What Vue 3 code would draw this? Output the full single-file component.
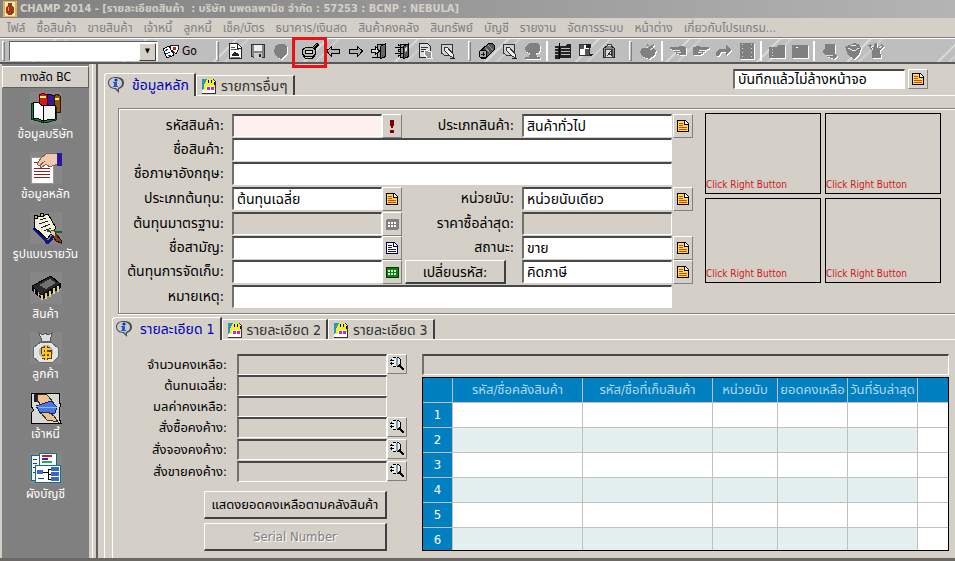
<template>
  <div class="window">
    <svg class="defs" aria-hidden="true">
      <symbol id="note" viewBox="0 0 14 14">
        <path d="M1 1H9L13 5V13H1Z" fill="#000" />
        <path d="M2 2H8V6H12V12H2Z" fill="#ffd75a" />
        <path d="M9 2L12 5H9Z" fill="#fff" />
        <path d="M3 4H7V5H3ZM3 6H7V7H3ZM3 8H11V9H3ZM3 10H11V11H3Z" fill="#d04410" />
      </symbol>
      <symbol id="note-blue" viewBox="0 0 14 14">
        <path d="M1 1H9L13 5V13H1Z" fill="#000050" />
        <path d="M2 2H8V6H12V12H2Z" fill="#fff" />
        <path d="M9 2L12 5H9Z" fill="#fff" />
        <path d="M3 4H7V5H3ZM3 6H7V7H3ZM3 8H11V9H3ZM3 10H11V11H3Z" fill="#1018a0" />
      </symbol>
      <symbol id="alert" viewBox="0 0 14 14">
        <path d="M5 1H9V5L8 9H6L5 5ZM5 11H9V14H5Z" fill="#800000" />
      </symbol>
      <symbol id="grid-gray" viewBox="0 0 14 14">
        <rect x="1" y="2" width="13" height="11" rx="2" fill="#808080" />
        <path d="M3 5.5H12M3 8.5H12" stroke="#fff" stroke-width="2" stroke-dasharray="2 1" />
      </symbol>
      <symbol id="grid-green" viewBox="0 0 14 14">
        <rect x="1.5" y="2.5" width="12" height="10" rx="1" fill="#108010" stroke="#003800" />
        <path d="M3 5.5H12M3 8.5H12" stroke="#d8ffd8" stroke-width="2" stroke-dasharray="2 1" />
      </symbol>
      <symbol id="lens" viewBox="0 0 16 16">
        <circle cx="7" cy="6" r="5" fill="#e4f2f8" stroke="#000" stroke-dasharray="3 1" />
        <path d="M7 2H9V10H7Z" fill="#909aa0" />
        <path d="M1 4H5V5H1ZM1 7H5V8H1Z" fill="#000" />
        <path d="M10 9L14 13" stroke="#000" stroke-width="2" />
        <circle cx="14" cy="13" r="1" fill="#fff" stroke="#000" />
      </symbol>
      <symbol id="info" viewBox="0 0 18 18">
        <path d="M9 1C4 1 1 3 1 7C1 10 4 13 8 13L12 17V13C15 12 17 10 17 7C17 3 14 1 9 1Z" fill="#484c50" />
        <path d="M8 2C4 2 2 4 2 7C2 10 5 12 9 12L11 14V12C14 11 15 9 15 7C15 4 12 2 8 2Z" fill="#c4ccd2" />
        <circle cx="9" cy="4" r="1.6" fill="#1830b0" />
        <path d="M6 6H10V10H11V11H6V10H7V7H6Z" fill="#2858c8" />
      </symbol>
      <symbol id="picture" viewBox="0 0 16 16">
        <path d="M1 1H12L15 4V16H1Z" fill="#333" />
        <path d="M1 1H12L14 4V15H1Z" fill="#fff" />
        <path d="M1 1H8L5 8L1 13Z" fill="#2898b8" />
        <path d="M6 1H12L14 5V10H12V8H5V12H3V7Z" fill="#f8f020" />
        <path d="M7 2H8V5H7ZM10 2H11V5H10ZM13 4H14V7H13Z" fill="#000" />
        <path d="M6 9H9V12H6ZM10 9H13V12H10Z" fill="#e020b0" />
      </symbol>
      <symbol id="logo" viewBox="0 0 14 16">
        <rect width="14" height="16" fill="#e8b050" />
        <rect x="2" y="1" width="10" height="14" fill="#fbe9b8" />
        <path d="M5 2H9V4L11 7V11L9 14H5L3 11V7L5 4Z" fill="#a03818" />
        <path d="M5 6V10" stroke="#e09060" />
      </symbol>
      <symbol id="cards" viewBox="0 0 18 16">
        <path d="M1 6L7 3L12 12L5 15Z" fill="#fff" stroke="#000" />
        <path d="M3 8L6 6M4 11L8 9M6 13L9 12" stroke="#2030a0" />
        <path d="M9 2H16V7L14 11L8 6Z" fill="#fff" stroke="#301820" />
        <path d="M11 4H14V7H11Z" fill="#c02020" />
      </symbol>

      <symbol id="doc" viewBox="0 0 18 18">
        <path d="M3.5 1.5H11.5L15.5 5.5V16.5H3.5Z" fill="#fff" stroke="#222" />
        <path d="M11 2V6H15" fill="none" stroke="#222" />
        <path d="M5 5.5H9M5 7.5H13" stroke="#555" />
        <path d="M6 14V12L9 10L13 12V14Z" fill="#222" />
        <path d="M5 15.5H14" stroke="#777" />
      </symbol>
      <symbol id="disk" viewBox="0 0 18 18">
        <path d="M2.5 2.5H15.5V15.5H4.5L2.5 14Z" fill="#858585" stroke="#333" />
        <rect x="5" y="3" width="8" height="6" fill="#eee" />
        <rect x="5" y="11" width="8" height="5" fill="#ccc" />
        <rect x="10" y="12" width="2" height="3" fill="#222" />
      </symbol>
      <symbol id="shield" viewBox="0 0 18 18">
        <path d="M3 4L7 2H12L15 5V11L12 15L9 17L4 14L2 10Z" fill="#808080" />
      </symbol>
      <symbol id="find" viewBox="0 0 18 18">
        <path d="M12 7L17 2" stroke="#000" stroke-width="4" />
        <path d="M12 6L16 2" stroke="#999" />
        <path d="M2 13V15L5 17H11L14 15V13Z" fill="#000" />
        <ellipse cx="8" cy="10" rx="7" ry="5" fill="#b8b8b8" stroke="#000" />
        <ellipse cx="8" cy="10" rx="4" ry="2" fill="#ddd" stroke="#000" />
        <path d="M4 15H11" stroke="#ccc" />
      </symbol>
      <symbol id="left" viewBox="0 0 18 18">
        <path d="M2.5 9L7.5 4.5V7.5H15.5V11.5H7.5V14.5Z" fill="#b0b0b0" stroke="#000" />
      </symbol>
      <symbol id="right" viewBox="0 0 18 18">
        <path d="M15.5 9L10.5 4.5V7.5H2.5V11.5H10.5V14.5Z" fill="#b0b0b0" stroke="#000" />
      </symbol>
      <symbol id="door" viewBox="0 0 18 18">
        <path d="M7.5 2.5H14.5V15.5H7.5Z" fill="#aaa" stroke="#000" />
        <path d="M10.5 4.5L15.5 1.5V14.5L10.5 16.5Z" fill="#666" stroke="#000" />
        <path d="M1.5 7.5H5.5V4.5L9.5 9L5.5 12.5V10.5H1.5Z" fill="#ddd" stroke="#000" />
        <path d="M2 15.5H10" stroke="#000" />
      </symbol>
      <symbol id="door-all" viewBox="0 0 18 18">
        <path d="M7.5 2.5H14.5V15.5H7.5Z" fill="#999" stroke="#000" />
        <path d="M10.5 4.5L15.5 1.5V14.5L10.5 16.5Z" fill="#555" stroke="#000" />
        <path d="M2 5.5H8M5 2.5L9 5.5L5 8.5M2 11.5H8M5 8.5L9 11.5L5 14.5" fill="none" stroke="#000" />
        <path d="M12 6L14 5V9L12 10Z" fill="#ddd" />
      </symbol>
      <symbol id="report" viewBox="0 0 18 18">
        <path d="M3.5 1.5H11.5L14.5 4.5V15.5H3.5Z" fill="#ddd" stroke="#222" />
        <path d="M5 5.5H12M5 7.5H10M5 9.5H8" stroke="#333" />
        <path d="M9 8L15 10L16 16H11L8 12Z" fill="#999" stroke="#fff" />
      </symbol>
      <symbol id="edit" viewBox="0 0 18 18">
        <path d="M2.5 2.5H13.5V13.5H5.5L2.5 11Z" fill="#d0d0d0" stroke="#333" />
        <path d="M5 5L8 5L14 12L15 16L11 14L5 8Z" fill="#eee" stroke="#333" />
        <path d="M11 16.5H16" stroke="#222" />
      </symbol>
      <symbol id="roll" viewBox="0 0 18 18">
        <path d="M1 10L10 2L14 1L17 4L16 8L8 16L3 16Z" fill="#555" stroke="#000" />
        <path d="M7 5L12 11M10 3L15 8" stroke="#999" />
        <circle cx="5" cy="12" r="4" fill="#aaa" stroke="#000" />
        <path d="M5 10V14M3 12H7" stroke="#111" />
      </symbol>
      <symbol id="head" viewBox="0 0 18 18">
        <path d="M5 1H13L16 3V7L15 11H12L13 15H16V17H1V15H5L6 11L2 10L1 6Z" fill="#808080" />
      </symbol>
      <symbol id="folder-list" viewBox="0 0 18 18">
        <path d="M1 4H11L13 2H17V16H5V17H1Z" fill="#222" />
        <path d="M1 6H4V7H1ZM1 9H4V10H1ZM1 12H4V13H1ZM7 6H16V7H7ZM7 9H16V10H7ZM7 12H16V13H7Z" fill="#bbb" />
        <path d="M5.5 1V17" stroke="#000" />
      </symbol>
      <symbol id="chart" viewBox="0 0 18 18">
        <rect x="2.5" y="2.5" width="10" height="11" fill="#fff" stroke="#333" />
        <path d="M3 3H7V7H3ZM8 7H12V13H8Z" fill="#555" />
        <path d="M9 2H14V6H9ZM12 12H16L14 15Z" fill="#222" />
      </symbol>
      <symbol id="clipboard" viewBox="0 0 18 18">
        <path d="M3.5 6.5L9 2.5L14.5 6.5V15.5H3.5Z" fill="#888" stroke="#222" />
        <path d="M7 4V2H11V4M5.5 7.5H12.5V15.5H5.5Z" fill="#ddd" stroke="#444" />
        <path d="M7 14L11 9V14M8 12H11" fill="none" stroke="#333" />
      </symbol>
      <symbol id="globe" viewBox="0 0 18 18">
        <path d="M3 6H7L8 2L11 4L15 2L14 6L17 9L15 14L10 17L4 15L1 10Z" fill="#808080" />
        <path d="M7 6L10 4M11 8L14 6" stroke="#ddd" />
      </symbol>
      <symbol id="hand-left" viewBox="0 0 18 18">
        <path d="M1 5H8L12 4L17 5V13H12L7 12V10H5V8L1 7Z" fill="#808080" />
        <path d="M5 8H11V9H5ZM8 10H12V11H8Z" fill="#eee" />
      </symbol>
      <symbol id="hand-right" viewBox="0 0 18 18">
        <path d="M17 5H10L6 4L1 5V13H6L11 12V10H13V8L17 7Z" fill="#808080" />
        <path d="M7 8H13V9H7ZM6 10H10V11H6Z" fill="#eee" />
      </symbol>
      <symbol id="redo" viewBox="0 0 18 18">
        <path d="M1 14V10L4 7H11V3L17 8L11 13V10H6L4 14Z" fill="#808080" />
      </symbol>
      <symbol id="book" viewBox="0 0 18 18">
        <path d="M2 1H16V17H2Z" fill="#808080" />
        <path d="M4.5 2V16M13.5 2V16" stroke="#ddd" stroke-dasharray="1 3" />
      </symbol>
      <symbol id="folder" viewBox="0 0 18 18">
        <path d="M1 5H8L10 3H17V16H1Z" fill="#808080" />
        <path d="M4.5 7V14" stroke="#ddd" stroke-dasharray="1 2" />
      </symbol>
      <symbol id="board" viewBox="0 0 18 18">
        <path d="M1 3H17V16H1Z" fill="#808080" />
        <rect x="5" y="5" width="2" height="1" fill="#fff" />
      </symbol>
      <symbol id="scroll" viewBox="0 0 18 18">
        <path d="M4 2H14V12L16 14L13 17L5 14L2 10V8L4 7Z" fill="#808080" />
        <path d="M5 13H12V14H5Z" fill="#ddd" />
      </symbol>
      <symbol id="box" viewBox="0 0 18 18">
        <path d="M1 5L10 1L16 3L17 7L15 13L10 17L4 13Z" fill="#808080" />
        <path d="M4 6L10 9L15 6M7 4L12 3" fill="none" stroke="#eee" />
      </symbol>
      <symbol id="tools" viewBox="0 0 18 18">
        <path d="M1 3L4 2L6 6L8 1H10V6L14 2L17 4L13 8L14 16H5V9Z" fill="#808080" />
        <path d="M4 4L6 8M12 6L15 4" stroke="#eee" />
      </symbol>

      <symbol id="company" viewBox="0 0 32 32">
        <path d="M9 3L13 1L17 3V14H9Z" fill="#d81818" stroke="#500000" />
        <path d="M17 3L20 2L24 4V15H17Z" fill="#3c1890" stroke="#100030" />
        <path d="M24 4L27 2L30 4V20H24Z" fill="#8a5018" stroke="#301800" />
        <path d="M10 5H16M25 7H29" stroke="#fff060" stroke-width="2" />
        <path d="M1 11L10 13L13 15L17 13L26 15V28L15 31L1 27Z" fill="#108040" stroke="#003018" />
        <path d="M3 10L9 11L13 14V29L9 27L3 26Z" fill="#fff" stroke="#000" />
        <path d="M13 14L17 13H25V27L17 28L13 29Z" fill="#f4f4f4" stroke="#000" />
      </symbol>
      <symbol id="master" viewBox="0 0 32 32">
        <path d="M1 5H23V31H1Z" fill="#fff" stroke="#999" />
        <path d="M4 16.5H20M4 19.5H20M4 22.5H20M4 25.5H20M4 10.5H9" stroke="#902020" />
        <path d="M7 12L11 6L17 1H27V12L20 15L16 12L11 16L10 14L15 9L9 14Z" fill="#f0c8b0" stroke="#806050" />
        <rect x="27" y="1" width="5" height="13" fill="#2818a0" />
      </symbol>
      <symbol id="journal" viewBox="0 0 32 32">
        <path d="M4 16L18 31L25 22" fill="none" stroke="#101880" stroke-width="3" />
        <path d="M5 6L18 2L26 16L17 27L4 15Z" fill="#f4f0e0" stroke="#000" />
        <path d="M10 8L16 6M9 12L18 9M11 16L20 12M14 19L21 16" stroke="#222" />
        <circle cx="6" cy="5" r="2" fill="#d8b860" stroke="#000" />
        <circle cx="12" cy="3" r="2" fill="#d8b860" stroke="#000" />
        <path d="M17 19L32 20" stroke="#106030" stroke-width="2" />
        <path d="M21 21L26 22L31 28V31L26 29Z" fill="#804020" stroke="#201000" />
        <path d="M20 18L25 20V24L22 23Z" fill="#f0c8a0" />
      </symbol>
      <symbol id="product" viewBox="0 0 32 32">
        <path d="M2 14L21 4L30 12L12 24Z" fill="#282828" stroke="#000" />
        <path d="M9 13L20 7L26 11L16 17Z" fill="#707070" />
        <path d="M2 14V18L12 27V23L30 12V16L12 27Z" fill="#111" stroke="#000" />
        <path d="M12 23V28M16 21V27M20 19V25M24 16V22M28 14V20" stroke="#ddd090" stroke-width="2" />
        <path d="M4 17V21M8 20V25" stroke="#aaa" />
      </symbol>
      <symbol id="customer" viewBox="0 0 32 32">
        <path d="M9 1L13 3L15 1L18 3L22 1L20 9H12Z" fill="#ddd" stroke="#555" />
        <path d="M11 10H21L28 16V25L23 30H9L3 25V16Z" fill="#e4e4e4" stroke="#666" />
        <path d="M11 10H21" stroke="#666" stroke-width="2" />
        <circle cx="16" cy="20" r="7" fill="#b4b4b4" />
        <path d="M20 17H13V20H20V25H12M16 14V28" fill="none" stroke="#604000" stroke-width="4" />
        <path d="M20 17H13V21H20V25H12M16 14V28" fill="none" stroke="#ffc820" stroke-width="2" />
      </symbol>
      <symbol id="vendor" viewBox="0 0 32 32">
        <path d="M1 1H29V10L31 13L29 17V26L31 31H1V21L4 18L1 14Z" fill="#d8d8d4" stroke="#000" />
        <path d="M7 2L17 3L24 11L20 15L10 12L7 8Z" fill="#f0c090" stroke="#303030" />
        <path d="M6 14L21 9L27 15L25 21L11 22Z" fill="#4878e0" stroke="#102060" />
        <path d="M6 14L12 16L27 15" fill="none" stroke="#90b8ff" />
        <path d="M11 21L18 20L24 24L28 30L17 28Z" fill="#f0c090" stroke="#303030" />
        <rect x="4" y="2" width="3" height="8" fill="#202020" />
      </symbol>
      <symbol id="accounts" viewBox="0 0 32 32">
        <path d="M1 3H15V28H1Z" fill="#f4f4f4" stroke="#107080" />
        <path d="M9 1H26V17H9Z" fill="#fff" stroke="#107080" />
        <path d="M12 4H22" stroke="#c02030" stroke-width="2" />
        <path d="M12 7H18" stroke="#5020a0" stroke-width="2" />
        <path d="M12 10H22" stroke="#20b040" stroke-width="2" />
        <path d="M3 7.5H7M3 11.5H7M3 15.5H5M3 20.5H5" stroke="#1840a0" />
        <rect x="5.5" y="13.5" width="25" height="17" fill="#fff" stroke="#107080" />
        <path d="M13 20.5H18M18 17.5H22M18 22.5H22M18 27.5H22M18.5 17V28" fill="none" stroke="#000" />
        <path d="M7 18H13V22H7ZM21 15H29V19H21ZM21 20H29V24H21ZM21 25H29V29H21Z" fill="#3868c0" />
        <path d="M8 26.5H14" stroke="#1840a0" />
      </symbol>
    </svg>

    <header class="title-bar">
      <svg class="title-logo"><use href="#logo" /></svg>
      <span>CHAMP 2014 - [รายละเอียดสินค้า&nbsp; : บริษัท นพดลพานิช จำกัด : 57253 : BCNP : NEBULA]</span>
    </header>

    <nav class="menu-bar">
      <a v-for="item in menus" :key="item" href="#">{{ item }}</a>
    </nav>

    <div class="toolbar">
      <i class="grip"></i>
      <div class="combo">
        <select aria-label="Go"><option></option></select>
      </div>
      <button class="go"><svg><use href="#cards" /></svg>Go</button>
      <template v-for="(group, g) in tools" :key="g">
        <i class="grip" :class="{ single: group.single, band: group.band }"></i>
        <button
          v-for="name in group.icons"
          :key="name"
          class="tool"
          :class="{ off: group.off || disabled.includes(name), marked: name === 'find' }"
          :aria-label="name"
        >
          <svg><use :href="'#' + name" /></svg>
        </button>
      </template>
    </div>

    <div class="body">
      <aside class="sidebar">
        <button class="side-title">ทางลัด BC</button>
        <button v-for="s in shortcuts" :key="s.icon" class="shortcut">
          <svg><use :href="'#' + s.icon" /></svg>
          {{ s.label }}
        </button>
      </aside>

      <main class="content">
        <div class="tab-row main-tabs">
          <button class="tab active"><svg class="info"><use href="#info" /></svg>ข้อมูลหลัก</button>
          <button class="tab"><svg><use href="#picture" /></svg>รายการอื่นๆ</button>
          <div class="after-save">
            <input v-model="afterSave" class="field" type="text" aria-label="หลังบันทึก" />
            <button class="mini" aria-label="เลือก"><svg><use href="#note" /></svg></button>
          </div>
        </div>

        <div class="panel">
          <section class="group">
            <div class="form">
              <template v-for="row in rows" :key="row.id">
                <label :for="row.id">{{ row.label }}</label>
                <input
                  :id="row.id"
                  v-model="row.value"
                  type="text"
                  class="field"
                  :class="{ wide: row.wide, required: row.required }"
                  :disabled="row.disabled"
                />
                <template v-if="!row.wide">
                  <button class="mini" :aria-label="row.icon"><svg><use :href="'#' + row.icon" /></svg></button>
                  <button v-if="row.right.button" class="raised change">{{ row.right.label }}</button>
                  <label v-else :for="row.right.id">{{ row.right.label }}</label>
                  <input
                    :id="row.right.id"
                    v-model="row.right.value"
                    type="text"
                    class="field"
                    :aria-label="row.right.label"
                    :disabled="row.right.disabled"
                  />
                </template>
                <button v-if="row.right && !row.right.disabled" class="mini last" aria-label="เลือก">
                  <svg><use href="#note" /></svg>
                </button>
                <span v-else></span>
              </template>
            </div>
            <div class="photos">
              <div v-for="n in 4" :key="n" class="photo">Click Right Button</div>
            </div>
          </section>

          <div class="inner">
            <div class="tab-row">
              <button class="tab active"><svg class="info"><use href="#info" /></svg>รายละเอียด 1</button>
              <button class="tab"><svg><use href="#picture" /></svg>รายละเอียด 2</button>
              <button class="tab"><svg><use href="#picture" /></svg>รายละเอียด 3</button>
            </div>
            <div class="detail">
              <div class="stock">
                <div v-for="b in balances" :key="b.id" class="stock-row">
                  <label :for="b.id">{{ b.label }}</label>
                  <input :id="b.id" class="field" type="text" disabled />
                  <button v-if="b.search" class="mini" aria-label="ค้นหา"><svg><use href="#lens" /></svg></button>
                </div>
                <button class="raised big">แสดงยอดคงเหลือตามคลังสินค้า</button>
                <button class="raised big" disabled>Serial Number</button>
              </div>
              <div class="warehouse">
                <input class="field" type="text" aria-label="คลังสินค้า" disabled />
                <div class="grid">
                  <table>
                    <colgroup>
                      <col class="c-no" /><col class="c-name" /><col class="c-name" />
                      <col class="c-unit" /><col class="c-num" /><col class="c-num" /><col />
                    </colgroup>
                    <thead>
                      <tr><th v-for="(h, i) in headers" :key="i">{{ h }}</th></tr>
                    </thead>
                    <tbody>
                      <tr v-for="n in 6" :key="n">
                        <th>{{ n }}</th>
                        <td v-for="c in 6" :key="c"></td>
                      </tr>
                    </tbody>
                  </table>
                </div>
              </div>
            </div>
          </div>
        </div>
      </main>
    </div>
    <footer class="status"></footer>
  </div>
</template>

<script setup>
import { ref } from 'vue';

const menus = [
  'ไฟล์', 'ซื้อสินค้า', 'ขายสินค้า', 'เจ้าหนี้', 'ลูกหนี้', 'เช็ค/บัตร', 'ธนาคาร/เงินสด',
  'สินค้าคงคลัง', 'สินทรัพย์', 'บัญชี', 'รายงาน', 'จัดการระบบ', 'หน้าต่าง', 'เกี่ยวกับโปรแกรม...'
];

const tools = [
  { icons: ['doc', 'disk', 'shield', 'find', 'left', 'right', 'door', 'door-all', 'report', 'edit'] },
  { icons: ['roll', 'edit', 'head'], band: true },
  { icons: ['folder-list', 'chart', 'clipboard'], single: true },
  { icons: ['globe'], off: true, band: true },
  { icons: ['hand-left', 'hand-right', 'redo', 'book'], off: true, single: true },
  { icons: ['folder', 'board'], off: true, single: true },
  { icons: ['scroll', 'box', 'tools'], off: true, single: true }
];
const disabled = ['shield', 'head'];

const shortcuts = [
  { icon: 'company', label: 'ข้อมูลบริษัท' },
  { icon: 'master', label: 'ข้อมูลหลัก' },
  { icon: 'journal', label: 'รูปแบบรายวัน' },
  { icon: 'product', label: 'สินค้า' },
  { icon: 'customer', label: 'ลูกค้า' },
  { icon: 'vendor', label: 'เจ้าหนี้' },
  { icon: 'accounts', label: 'ผังบัญชี' }
];

const afterSave = ref('บันทึกแล้วไม่ล้างหน้าจอ');

// ฟอร์มข้อมูลสินค้า
const rows = ref([
  { id: 'code', label: 'รหัสสินค้า:', value: '', required: true, icon: 'alert',
    right: { id: 'type', label: 'ประเภทสินค้า:', value: 'สินค้าทั่วไป' } },
  { id: 'name', label: 'ชื่อสินค้า:', value: '', wide: true },
  { id: 'name-en', label: 'ชื่อภาษาอังกฤษ:', value: '', wide: true },
  { id: 'cost-type', label: 'ประเภทต้นทุน:', value: 'ต้นทุนเฉลี่ย', icon: 'note',
    right: { id: 'unit', label: 'หน่วยนับ:', value: 'หน่วยนับเดียว' } },
  { id: 'std-cost', label: 'ต้นทุนมาตรฐาน:', value: '', disabled: true, icon: 'grid-gray',
    right: { id: 'last-price', label: 'ราคาซื้อล่าสุด:', value: '', disabled: true } },
  { id: 'common', label: 'ชื่อสามัญ:', value: '', icon: 'note-blue',
    right: { id: 'status', label: 'สถานะ:', value: 'ขาย' } },
  { id: 'store-cost', label: 'ต้นทุนการจัดเก็บ:', value: '', icon: 'grid-green',
    right: { id: 'tax', label: 'เปลี่ยนรหัส:', value: 'คิดภาษี', button: true } },
  { id: 'remark', label: 'หมายเหตุ:', value: '', wide: true }
]);

// ยอดคงเหลือ
const balances = [
  { id: 'qty', label: 'จำนวนคงเหลือ:', search: true },
  { id: 'avg', label: 'ต้นทนเฉลี่ย:' },
  { id: 'amount', label: 'มลค่าคงเหลือ:' },
  { id: 'ordered', label: 'สั่งซื้อคงค้าง:', search: true },
  { id: 'reserved', label: 'สั่งจองคงค้าง:', search: true },
  { id: 'sold', label: 'สั่งขายคงค้าง:', search: true }
];

const headers = ['', 'รหัส/ชื่อคลังสินค้า', 'รหัส/ชื่อที่เก็บสินค้า', 'หน่วยนับ', 'ยอดคงเหลือ', 'วันที่รับล่าสุด', ''];
</script>

<style>
body {
  margin: 0;
  background: #d4d0c8;
}
</style>

<style scoped>
* {
  box-sizing: border-box;
}

.window {
  min-height: 100vh;
  display: flex;
  flex-direction: column;
  overflow: hidden;
  background: #d4d0c8;
  color: #000;
  font-family: Tahoma, "DejaVu Sans Condensed", "Noto Sans Thai", sans-serif;
  font-size: 12px;
  line-height: 16px;
}

.defs {
  position: absolute;
  width: 0;
  height: 0;
}

svg {
  flex: none;
  shape-rendering: crispEdges;
}

button,
input,
select {
  font: inherit;
  color: inherit;
  margin: 0;
  padding: 0;
  border: 0;
  border-radius: 0;
  background: none;
  min-width: 0;
}

.title-bar {
  height: 18px;
  display: flex;
  align-items: center;
  gap: 3px;
  padding-left: 3px;
  background: linear-gradient(90deg, #808080, #b4b4b4);
  color: #d4d0c8;
  font-size: 11px;
  font-weight: bold;
  white-space: nowrap;
}

.title-logo {
  width: 14px;
  height: 16px;
}

.menu-bar {
  height: 20px;
  display: flex;
  align-items: center;
  gap: 11px;
  padding-left: 7px;
  border-bottom: 1px solid #808080;
  white-space: nowrap;
}

.menu-bar a {
  color: #808080;
  text-decoration: none;
}

.toolbar {
  position: relative;
  z-index: 1;
  height: 26px;
  display: flex;
  align-items: center;
  padding-left: 2px;
  border-top: 1px solid #fff;
  border-bottom: 2px solid #585858;
  background: repeating-linear-gradient(135deg, #bebebe 0 38px, #dadada 39px 40px, #bebebe 41px 46px, #cecece 47px 48px, #bebebe 49px 64px);
}

.grip {
  width: 3px;
  height: 20px;
  margin: 0 4px;
  border: 1px solid #808080;
  border-top-color: #fff;
  border-left-color: #fff;
}

.grip:first-child {
  margin-left: 0;
}

.grip.band {
  margin-left: 9px;
}

.grip.single {
  width: 2px;
  border-width: 0 1px;
  border-color: #808080 #fff;
  margin: 0 3px 0 2px;
}

.combo {
  position: relative;
  width: 149px;
  height: 20px;
  border: 1px solid #606060;
  border-right-color: #fff;
  border-bottom-color: #fff;
  background: #fff;
}

.combo::after {
  content: "▼";
  position: absolute;
  top: 1px;
  right: 1px;
  width: 15px;
  height: 16px;
  border: 1px solid #404040;
  border-top-color: #fff;
  border-left-color: #fff;
  background: #d4d0c8;
  font-size: 7px;
  line-height: 14px;
  text-align: center;
  pointer-events: none;
}

.combo select {
  width: 100%;
  height: 100%;
  appearance: none;
}

.go {
  display: flex;
  align-items: center;
  gap: 2px;
  width: 54px;
  padding-left: 4px;
}

.go svg {
  width: 18px;
  height: 16px;
}

.tool {
  position: relative;
  width: 23px;
  height: 22px;
  display: flex;
  align-items: center;
  justify-content: center;
}

.tool svg {
  width: 18px;
  height: 18px;
}

.tool.off svg {
  filter: drop-shadow(1px 1px 0 #fff);
}

.tool.marked {
  width: 35px;
  margin-right: -6px;
}

.tool.marked::after {
  content: "";
  position: absolute;
  inset: -3px 0 -6px;
  border: 3px solid #ee1111;
  z-index: 1;
}

.body {
  flex: 1;
  display: flex;
}

.sidebar {
  width: 96px;
  flex: none;
  display: flex;
  flex-direction: column;
  padding-top: 2px;
  background: linear-gradient(90deg, #d4d0c8 0 2px, #808080 2px 89px, #d4d0c8 89px 92px, #fff 92px 93px, #d4d0c8 93px);
}

.side-title {
  width: 87px;
  height: 22px;
  margin: 0 0 4px 2px;
  border: 1px solid #606060;
  border-top-color: #fff;
  border-left-color: #fff;
  background: #d4d0c8;
}

.shortcut {
  width: 91px;
  height: 60px;
  display: flex;
  flex-direction: column;
  align-items: center;
  gap: 2px;
  color: #fff;
}

.shortcut svg {
  width: 32px;
  height: 32px;
  background: #868686;
}

.content {
  flex: 1;
  min-width: 0;
  display: flex;
  flex-direction: column;
  padding: 2px 0 0 6px;
  border-left: 2px solid #606060;
}

.tab-row {
  display: flex;
  align-items: flex-end;
  position: relative;
}

.main-tabs {
  height: 29px;
}

.tab {
  height: 20px;
  display: flex;
  align-items: center;
  gap: 4px;
  padding: 0 5px 0 4px;
  border-top: 1px solid #fff;
  border-left: 1px solid #fff;
  border-right: 2px solid #404040;
  color: #303030;
  font-size: 14px;
  white-space: nowrap;
}

.tab svg {
  width: 16px;
  height: 16px;
}

.tab.active {
  height: 23px;
  margin-bottom: -1px;
  gap: 7px;
  padding-left: 2px;
  border-radius: 3px 0 0 0;
  background: #d4d0c8;
  color: #0000b8;
  z-index: 1;
}

.tab svg.info {
  width: 18px;
  height: 18px;
  shape-rendering: auto;
}

.after-save {
  display: flex;
  gap: 3px;
  margin: 0 27px 6px auto;
}

.after-save .field {
  width: 172px;
  height: 20px;
}

.field {
  width: 100%;
  height: 23px;
  padding: 0 3px;
  border: 2px solid #fff;
  border-top-color: #484848;
  border-left-color: #707070;
  border-right-width: 1px;
  border-bottom-width: 1px;
  background: #fff;
  font-size: 14px;
}

.field.required {
  background: #fff0f0;
}

.field:disabled {
  background: #d4d0c8;
}

.mini {
  width: 20px;
  height: 20px;
  flex: none;
  display: flex;
  align-items: center;
  justify-content: center;
  border: 1px solid #808080;
  border-top-color: #fff;
  border-left-color: #fff;
}

.mini svg {
  width: 14px;
  height: 14px;
}

.panel {
  flex: 1;
  display: flex;
  flex-direction: column;
  padding: 12px 0 0 7px;
  border-top: 1px solid #fff;
  border-left: 1px solid #fff;
}

.group {
  display: flex;
  gap: 12px;
  margin-left: 6px;
  padding: 4px 14px 5px 0;
  border: 1px solid #808080;
  border-right: 0;
  box-shadow: inset 1px 1px 0 #fff, 0 1px 0 #fff;
}

.form {
  flex: 1;
  display: grid;
  grid-template-columns: 113px 1fr 20px 120px 1fr 21px;
  grid-template-rows: 24px 24px 25px 25px 24px 24px 25px 23px;
  padding-top: 1px;
  font-size: 14px;
}

.form label,
.stock label {
  padding: 3px 8px 0 0;
  text-align: right;
  white-space: nowrap;
}

.form .mini {
  height: 24px;
}

.form .last {
  margin-left: 1px;
}

.wide {
  grid-column: 2 / 6;
}

.raised {
  border: 1px solid #404040;
  border-right-width: 2px;
  border-bottom-width: 2px;
  border-top-color: #fff;
  border-left-color: #fff;
  white-space: nowrap;
}

.change {
  height: 24px;
  margin: 0 16px 0 3px;
}

.photos {
  display: grid;
  grid-template-columns: 116px 116px;
  grid-template-rows: 81px 85px;
  gap: 4px;
}

.photo {
  display: flex;
  align-items: flex-end;
  border: 1px solid #000;
  color: #d01818;
  font-size: 10px;
}

.inner {
  flex: 1;
  display: flex;
  flex-direction: column;
  padding-top: 3px;
}

.detail {
  flex: 1;
  display: flex;
  gap: 15px;
  padding: 14px 6px 7px 0;
  border-top: 1px solid #fff;
  border-left: 1px solid #fff;
  font-size: 13px;
}

.stock {
  width: 294px;
  flex: none;
  display: flex;
  flex-direction: column;
}

.stock-row {
  display: grid;
  grid-template-columns: 124px 150px 20px;
  height: 21px;
}

.stock-row:nth-child(n + 4) {
  height: 22px;
}

.stock label {
  padding-right: 10px;
}

.stock .field,
.warehouse .field {
  height: 21px;
}

.stock .mini svg {
  width: 16px;
  height: 16px;
}

.big {
  width: 183px;
  height: 28px;
  margin: 8px 0 0 91px;
}

.big + .big {
  margin-top: 4px;
}

.big:disabled {
  color: #808080;
  text-shadow: 1px 1px 0 #fff;
}

.warehouse {
  flex: 1;
  min-width: 0;
}

.grid {
  height: 174px;
  margin-top: 2px;
  overflow: hidden;
  border: 1px solid #000;
  background: #fff;
}

table {
  width: 100%;
  table-layout: fixed;
  border-spacing: 0;
}

.c-no {
  width: 30px;
}

.c-name {
  width: 130px;
}

.c-unit {
  width: 65px;
}

.c-num {
  width: 70px;
}

th,
td {
  height: 25px;
  padding: 0;
  border-right: 1px solid #c0c0c0;
  border-bottom: 1px solid #c0c0c0;
}

th {
  background: #0080c0;
  color: #fff;
  font-weight: normal;
  white-space: nowrap;
}

thead th {
  color: #b4d8ec;
}

th:last-child,
td:last-child {
  border-right: 0;
}

tbody tr:nth-child(even) td:not(:last-child) {
  background: #e4f0f0;
}

.status {
  height: 3px;
  background: #6c6864;
}
</style>
